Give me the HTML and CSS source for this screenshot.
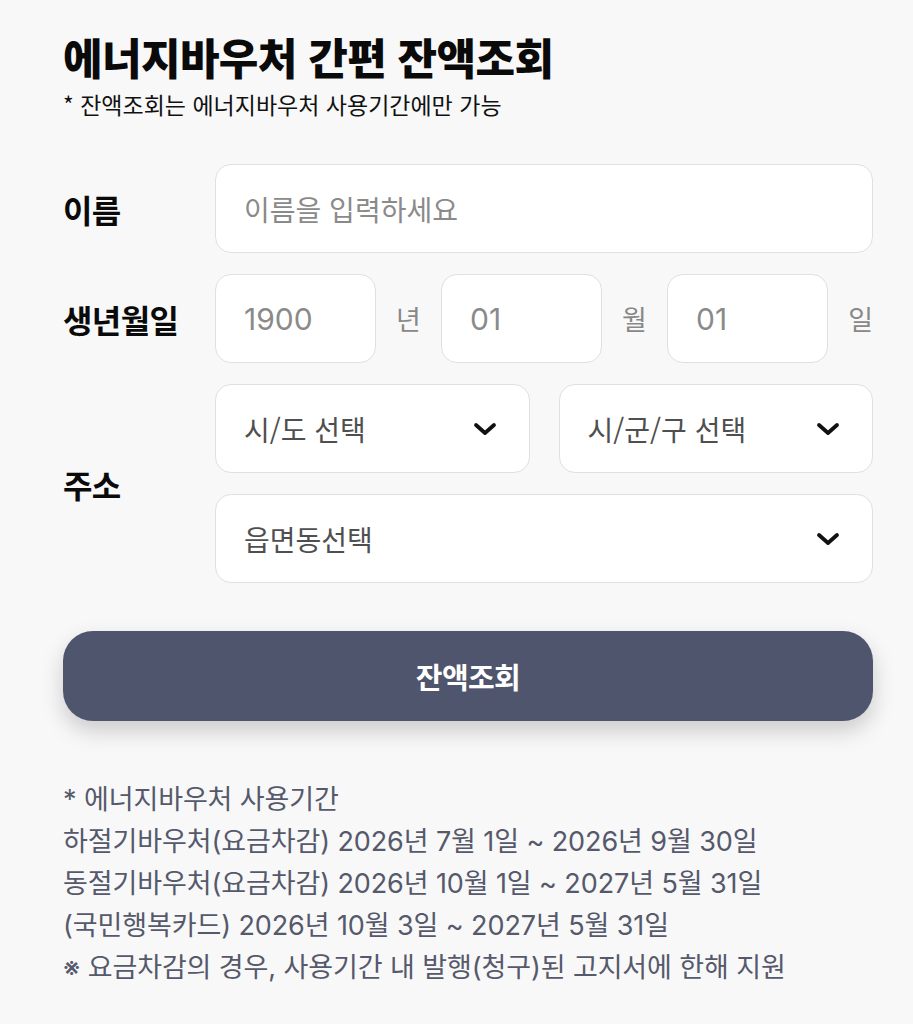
FILE: index.html
```html
<!DOCTYPE html>
<html lang="ko">
<head>
<meta charset="utf-8">
<link rel="stylesheet" href="styles.css">
</head>
<body>
<main class="page">
  <header class="head">
    <h1 class="title">에너지바우처 간편 잔액조회</h1>
    <p class="sub">* 잔액조회는 에너지바우처 사용기간에만 가능</p>
  </header>

  <form class="form">
    <div class="row">
      <div class="label">이름</div>
      <div class="field">
        <div class="box box-full"><span class="ph">이름을 입력하세요</span></div>
      </div>
    </div>

    <div class="row">
      <div class="label">생년월일</div>
      <div class="field birth">
        <div class="box box-date"><span class="ph num">1900</span></div>
        <span class="unit">년</span>
        <div class="box box-date"><span class="ph num">01</span></div>
        <span class="unit">월</span>
        <div class="box box-date"><span class="ph num">01</span></div>
        <span class="unit unit-last">일</span>
      </div>
    </div>

    <div class="row">
      <div class="label">주소</div>
      <div class="field addr">
        <div class="addr-top">
          <div class="box select"><span class="val">시/도 선택</span>
            <svg class="chev" viewBox="0 0 24 14" width="24" height="14"><path d="M3 3l9 8 9-8" fill="none" stroke="#111" stroke-width="3.8" stroke-linecap="round" stroke-linejoin="round"/></svg>
          </div>
          <div class="box select"><span class="val">시/군/구 선택</span>
            <svg class="chev" viewBox="0 0 24 14" width="24" height="14"><path d="M3 3l9 8 9-8" fill="none" stroke="#111" stroke-width="3.8" stroke-linecap="round" stroke-linejoin="round"/></svg>
          </div>
        </div>
        <div class="box select"><span class="val">읍면동선택</span>
          <svg class="chev" viewBox="0 0 24 14" width="24" height="14"><path d="M3 3l9 8 9-8" fill="none" stroke="#111" stroke-width="3.8" stroke-linecap="round" stroke-linejoin="round"/></svg>
        </div>
      </div>
    </div>

    <button type="button" class="btn">잔액조회</button>
  </form>

  <section class="notes">
    <p>* 에너지바우처 사용기간</p>
    <p>하절기바우처(요금차감) 2026년 7월 1일 ~ 2026년 9월 30일</p>
    <p>동절기바우처(요금차감) 2026년 10월 1일 ~ 2027년 5월 31일</p>
    <p>(국민행복카드) 2026년 10월 3일 ~ 2027년 5월 31일</p>
    <p>※ 요금차감의 경우, 사용기간 내 발행(청구)된 고지서에 한해 지원</p>
  </section>
</main>
</body>
</html>
```

FILE: styles.css
```css
* { box-sizing: border-box; }
html, body {
  margin: 0;
  padding: 0;
  background: #f8f8f8;
}
body {
  font-family: "Inter", "Noto Sans CJK KR", sans-serif;
  color: #111;
}
.page {
  width: 913px;
  padding: 29px 40px 40px 63px;
}
.head { margin: 0; }
.title {
  margin: 0;
  font-family: "Noto Sans CJK KR", sans-serif;
  font-weight: 900;
  font-size: 43px;
  line-height: 54px;
  letter-spacing: -0.6px;
  color: #0a0a0a;
}
.sub {
  margin: 6px 0 0;
  font-family: "Noto Sans CJK KR", sans-serif;
  font-size: 23px;
  line-height: 30px;
  color: #111;
}
.form {
  margin-top: 45px;
  display: flex;
  flex-direction: column;
  gap: 21px;
}
.row {
  display: flex;
  align-items: center;
}
.label {
  width: 152px;
  flex: none;
  font-family: "Noto Sans CJK KR", sans-serif;
  font-weight: 700;
  font-size: 32px;
  letter-spacing: -0.6px;
  color: #0a0a0a;
}
.field { flex: 1; }
.box {
  height: 89px;
  background: #fff;
  border: 1.5px solid #e0e0e0;
  border-radius: 16px;
  display: flex;
  align-items: center;
  padding: 0 28px;
  font-family: "Noto Sans CJK KR", sans-serif;
  font-size: 28px;
}
.ph { color: #8a8a8a; }
.num {
  font-family: "Inter", sans-serif;
  font-size: 30px;
}
.birth {
  display: flex;
  align-items: center;
}
.box-date { width: 161px; flex: none; }
.unit {
  width: 65px;
  flex: none;
  text-align: center;
  font-family: "Noto Sans CJK KR", sans-serif;
  font-size: 27px;
  color: #888;
}
.unit-last {
  width: auto;
  flex: 1;
  text-align: right;
}
.addr {
  display: flex;
  flex-direction: column;
  gap: 21px;
}
.addr-top {
  display: flex;
  gap: 29px;
}
.addr-top .select { flex: 1; }
.select {
  justify-content: space-between;
  padding-right: 32px;
}
.val {
  color: #4f4f4f;
}
.chev { flex: none; }
.btn {
  margin-top: 27px;
  height: 90px;
  width: 100%;
  border: none;
  border-radius: 30px;
  background: #50556e;
  color: #fff;
  font-family: "Noto Sans CJK KR", sans-serif;
  font-weight: 700;
  font-size: 29px;
  letter-spacing: -0.6px;
  box-shadow: 0 10px 22px rgba(0, 0, 0, 0.18);
}
.notes {
  margin-top: 58px;
  color: #55596b;
  font-size: 27px;
  line-height: 42px;
  letter-spacing: -0.1px;
}
.notes p { margin: 0; }
```
